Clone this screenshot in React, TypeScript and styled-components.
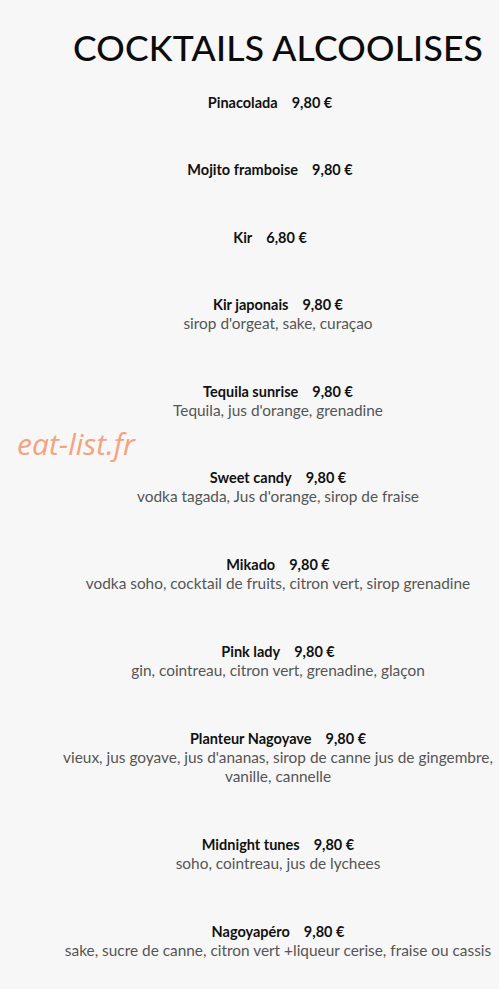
import React from "react";
import styled, { createGlobalStyle } from "styled-components";

const Global = createGlobalStyle`
  html, body { margin: 0; padding: 0; background: #f7f7f7; }
  body { font-family: "Lato", "Liberation Sans", sans-serif; }
`;

const Page = styled.div`
  position: relative;
  width: 499px;
  min-height: 989px;
  background: #f7f7f7;
  overflow: hidden;
`;

const Content = styled.main`
  display: flex;
  flex-direction: column;
  align-items: center;
  margin-left: 57px;
  width: 442px;
  padding-top: 26px;
`;

const Title = styled.h1`
  margin: 0 0 24px;
  font-family: "Lato", "Liberation Sans", sans-serif;
  font-weight: 500;
  font-size: 35.5px;
  line-height: 44px;
  letter-spacing: 0.2px;
  color: #0b0b0b;
`;

const Item = styled.section`
  display: flex;
  flex-direction: column;
  align-items: center;
  margin-bottom: 49.25px;
  text-align: center;
`;

const NameLine = styled.div<{ $offset?: boolean }>`
  font-family: "Lato", "Liberation Sans", sans-serif;
  font-weight: 700;
  font-size: 14.5px;
  line-height: 18px;
  color: #111;
  padding-right: ${(p) => (p.$offset ? "16px" : "0")};
  white-space: pre;
`;

const Price = styled.span`
  margin-left: 14px;
`;

const Desc = styled.p`
  margin: 0;
  font-family: "Lato", "Liberation Sans", sans-serif;
  font-size: 15.4px;
  line-height: 19.5px;
  color: #555;
`;

const Watermark = styled.div`
  position: absolute;
  left: 17px;
  top: 423px;
  font-family: "Open Sans", sans-serif;
  font-style: italic;
  font-size: 30px;
  color: #f4a27f;
`;

const items: { name: string; price: string; desc?: string[]; offset?: boolean }[] = [
  { name: "Pinacolada", price: "9,80 €", offset: true },
  { name: "Mojito framboise", price: "9,80 €", offset: true },
  { name: "Kir", price: "6,80 €", offset: true },
  { name: "Kir japonais", price: "9,80 €", desc: ["sirop d'orgeat, sake, curaçao"] },
  { name: "Tequila sunrise", price: "9,80 €", desc: ["Tequila, jus d'orange, grenadine"] },
  { name: "Sweet candy", price: "9,80 €", desc: ["vodka tagada, Jus d'orange, sirop de fraise"] },
  { name: "Mikado", price: "9,80 €", desc: ["vodka soho, cocktail de fruits, citron vert, sirop grenadine"] },
  { name: "Pink lady", price: "9,80 €", desc: ["gin, cointreau, citron vert, grenadine, glaçon"] },
  {
    name: "Planteur Nagoyave",
    price: "9,80 €",
    desc: ["vieux, jus goyave, jus d'ananas, sirop de canne jus de gingembre,", "vanille, cannelle"],
  },
  { name: "Midnight tunes", price: "9,80 €", desc: ["soho, cointreau, jus de lychees"] },
  { name: "Nagoyapéro", price: "9,80 €", desc: ["sake, sucre de canne, citron vert +liqueur cerise, fraise ou cassis"] },
];

export default function App() {
  return (
    <Page>
      <Global />
      <Content>
        <Title>COCKTAILS ALCOOLISES</Title>
        {items.map((it) => (
          <Item key={it.name}>
            <NameLine $offset={it.offset}>
              {it.name}
              <Price>{it.price}</Price>
            </NameLine>
            {it.desc?.map((d) => (
              <Desc key={d}>{d}</Desc>
            ))}
          </Item>
        ))}
      </Content>
      <Watermark>eat-list.fr</Watermark>
    </Page>
  );
}
